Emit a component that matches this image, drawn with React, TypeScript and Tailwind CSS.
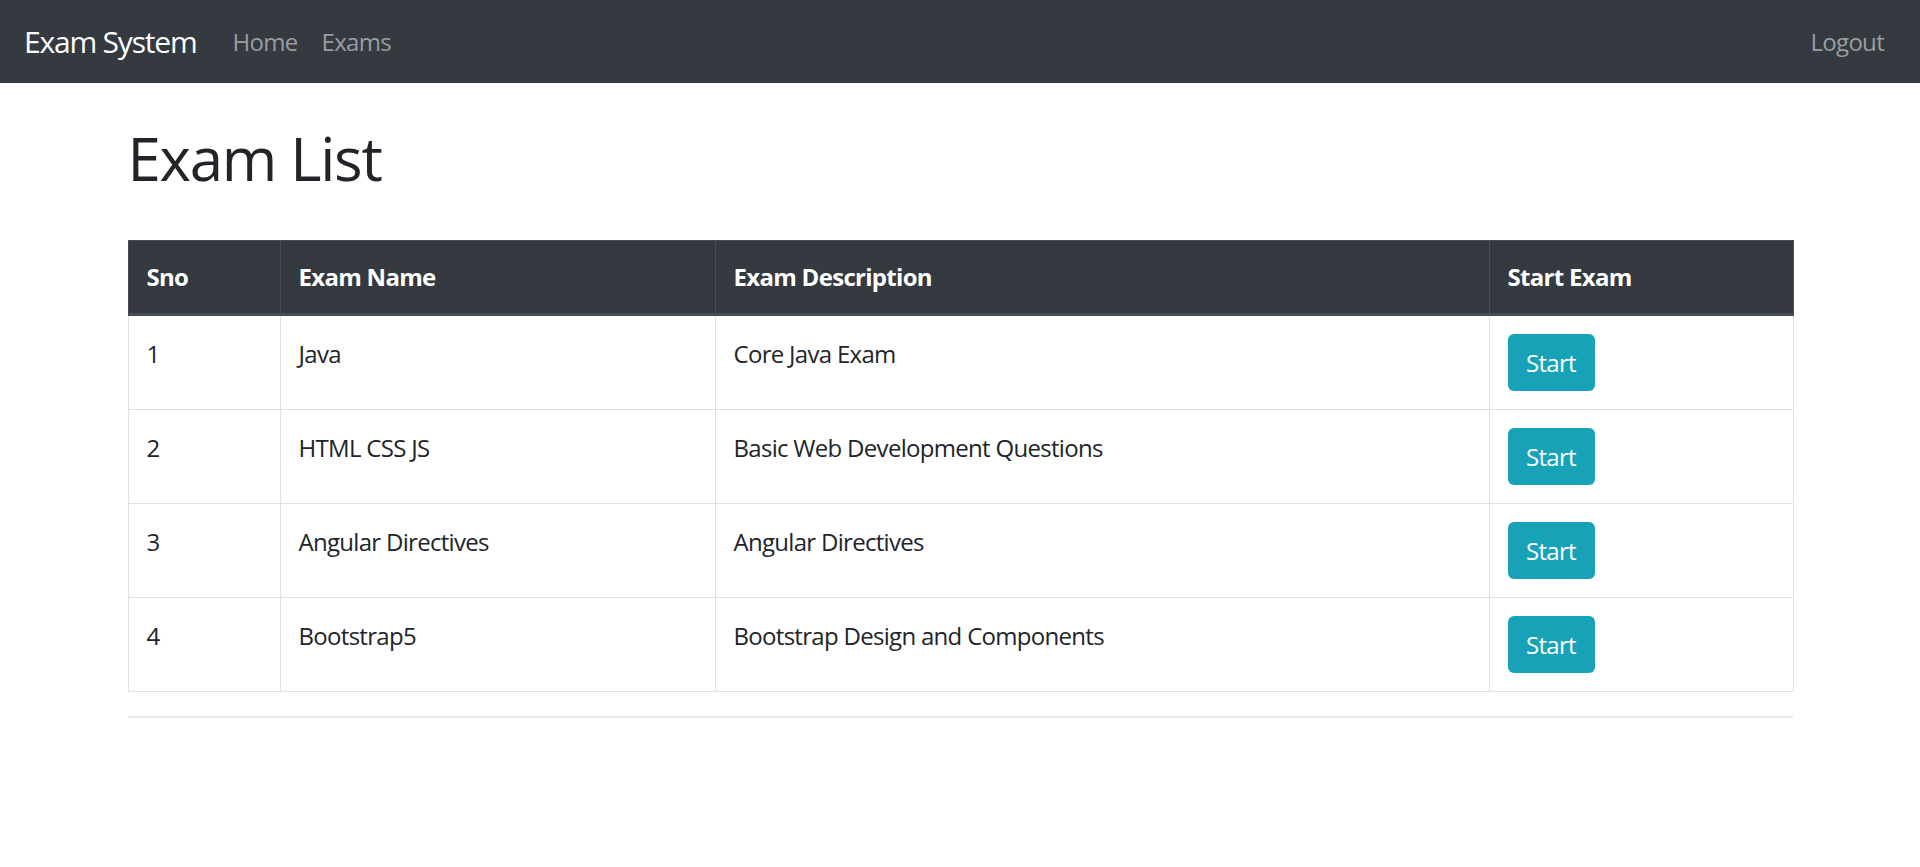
import React from 'react';

interface Exam {
  sno: number;
  name: string;
  description: string;
}

const exams: Exam[] = [
  { sno: 1, name: 'Java', description: 'Core Java Exam' },
  { sno: 2, name: 'HTML CSS JS', description: 'Basic Web Development Questions' },
  { sno: 3, name: 'Angular Directives', description: 'Angular Directives' },
  { sno: 4, name: 'Bootstrap5', description: 'Bootstrap Design and Components' },
];

function Navbar() {
  return (
    <nav className="flex items-center justify-between h-[83px] bg-[#343a40] px-6">
      <div className="flex items-center">
        <a href="#" className="text-white text-[30px] leading-[45px] tracking-[-1.2px] mr-[24px]">Exam System</a>
        <a href="#" className="text-[#9a9da0] text-[24px] tracking-[-0.7px] px-3">Home</a>
        <a href="#" className="text-[#9a9da0] text-[24px] tracking-[-0.7px] px-3">Exams</a>
      </div>
      <a href="#" className="text-[#9a9da0] text-[24px] tracking-[-0.7px] px-3">Logout</a>
    </nav>
  );
}

function App() {
  return (
    <div className="min-h-screen bg-white text-[#212529] font-['Open_Sans',sans-serif]">
      <Navbar />
      <div className="w-[1665px] mx-auto">
        <h1 className="text-[60px] leading-[72px] font-medium tracking-[-1.3px] mt-[39px] mb-[46px]">Exam List</h1>
        <table className="w-full border-collapse text-[24px] leading-[36px] tracking-[-0.7px] table-fixed">
          <colgroup>
            <col className="w-[152px]" />
            <col className="w-[435px]" />
            <col className="w-[774px]" />
            <col className="w-[304px]" />
          </colgroup>
          <thead>
            <tr className="bg-[#343a40] text-white">
              <th className="text-left font-bold p-[18px] border border-[#454d55] border-b-[3px]">Sno</th>
              <th className="text-left font-bold p-[18px] border border-[#454d55] border-b-[3px]">Exam Name</th>
              <th className="text-left font-bold p-[18px] border border-[#454d55] border-b-[3px]">Exam Description</th>
              <th className="text-left font-bold p-[18px] border border-[#454d55] border-b-[3px]">Start Exam</th>
            </tr>
          </thead>
          <tbody>
            {exams.map((exam) => (
              <tr key={exam.sno}>
                <td className="align-top px-[18px] pt-[20px] pb-[18px] border border-[#dee2e6]">{exam.sno}</td>
                <td className="align-top px-[18px] pt-[20px] pb-[18px] border border-[#dee2e6]">{exam.name}</td>
                <td className="align-top px-[18px] pt-[20px] pb-[18px] border border-[#dee2e6]">{exam.description}</td>
                <td className="align-top p-[18px] border border-[#dee2e6]">
                  <button
                    type="button"
                    className="flex items-center justify-center w-[87px] h-[57px] bg-[#17a2b8] text-white text-[24px] leading-[36px] rounded-[6px]"
                  >
                    Start
                  </button>
                </td>
              </tr>
            ))}
          </tbody>
        </table>
        <hr className="mt-6 border-t-[2px] border-[#e6e6e6]" />
      </div>
    </div>
  );
}

export default App;
